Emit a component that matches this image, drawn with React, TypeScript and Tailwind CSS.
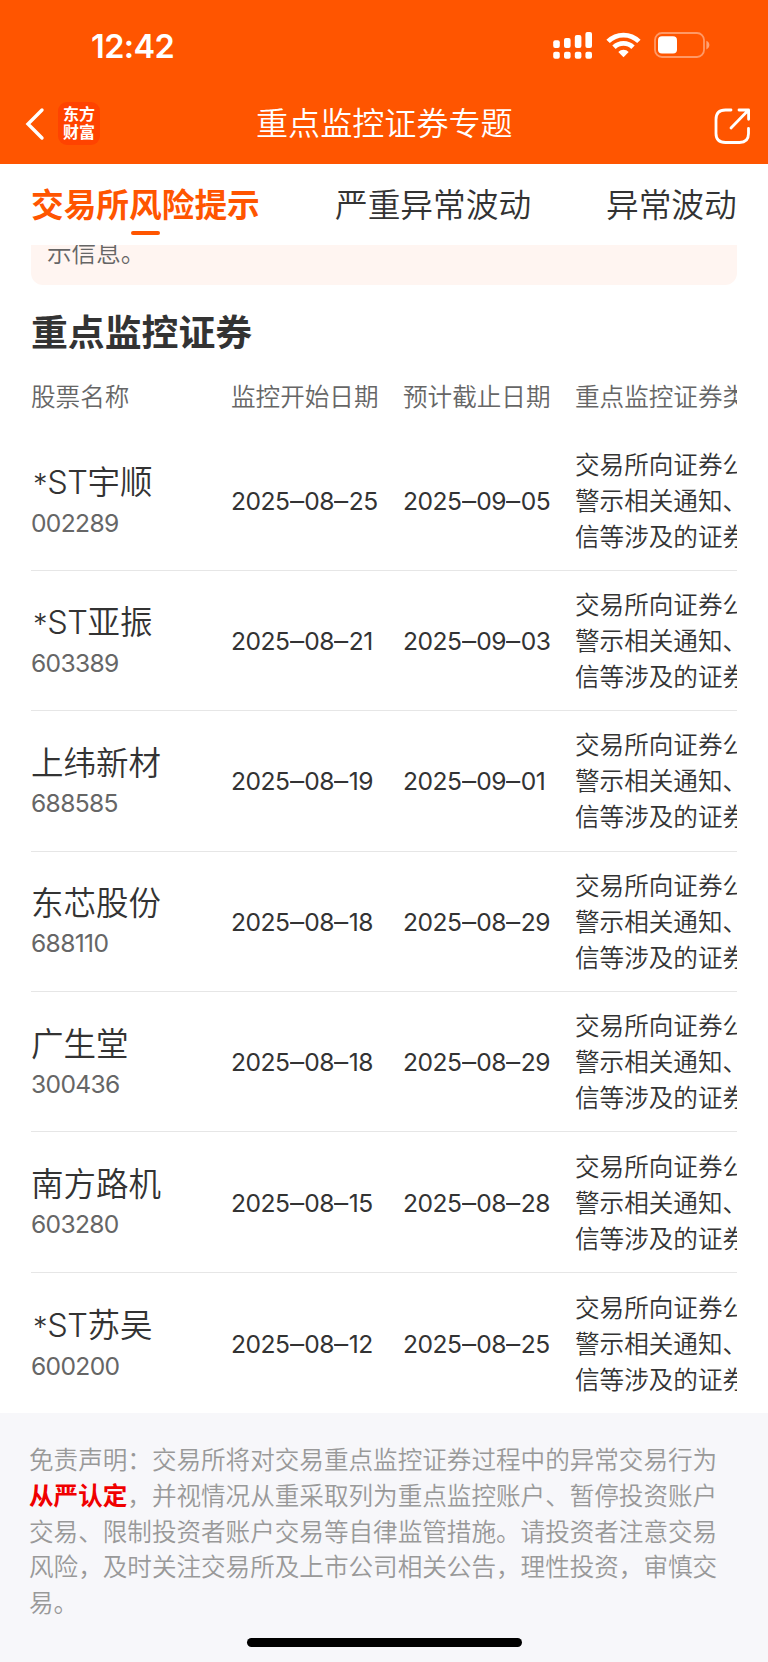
const STOCKS = [
  { name: '宇顺', st: true, code: '002289', start: '2025–08–25', end: '2025–09–05' },
  { name: '亚振', st: true, code: '603389', start: '2025–08–21', end: '2025–09–03' },
  { name: '上纬新材', st: false, code: '688585', start: '2025–08–19', end: '2025–09–01' },
  { name: '东芯股份', st: false, code: '688110', start: '2025–08–18', end: '2025–08–29' },
  { name: '广生堂', st: false, code: '300436', start: '2025–08–18', end: '2025–08–29' },
  { name: '南方路机', st: false, code: '603280', start: '2025–08–15', end: '2025–08–28' },
  { name: '苏吴', st: true, code: '600200', start: '2025–08–12', end: '2025–08–25' },
];

const DISCLAIMER = [
  '，并视情况从重采取列为重点监控账户、暂停投资账户',
  '交易、限制投资者账户交易等自律监管措施。请投资者注意交易',
  '风险，及时关注交易所及上市公司相关公告，理性投资，审慎交',
  '易。',
];

function SignalIcon() {
  return (
    <svg width="40" height="28" viewBox="0 0 40 28" fill="#fff">
      <rect x="0.2" y="8.2" width="6.6" height="7.8" rx="2" />
      <rect x="11" y="6" width="6.6" height="10" rx="2" />
      <rect x="21.8" y="3" width="6.6" height="13" rx="2" />
      <rect x="32.4" y="0" width="6.6" height="16" rx="2" />
      <rect x="0.2" y="19.8" width="6.6" height="7" rx="2" />
      <rect x="11" y="19.8" width="6.6" height="7" rx="2" />
      <rect x="21.8" y="19.8" width="6.6" height="7" rx="2" />
      <rect x="32.4" y="19.8" width="6.6" height="7" rx="2" />
    </svg>
  );
}

function WifiIcon() {
  return (
    <svg width="35" height="26" viewBox="0 0 35 26" fill="none" stroke="#fff" strokeWidth="4.8">
      <path d="M2.1 9.4a21.8 21.8 0 0 1 30.8 0" />
      <path d="M8 15.3a13.4 13.4 0 0 1 19 0" />
      <path d="M17.5 25.2l-5.2-5.3a7.4 7.4 0 0 1 10.4 0z" fill="#fff" stroke="none" />
    </svg>
  );
}

function BatteryIcon() {
  return (
    <svg width="56" height="26" viewBox="0 0 56 26">
      <rect x="1" y="1" width="49" height="24" rx="7" fill="none" stroke="#fff" strokeOpacity=".4" strokeWidth="1.8" />
      <rect x="4" y="4.2" width="19" height="17.4" rx="4" fill="#fff" />
      <path d="M52.4 8.8c4 1.3 4 7.3 0 8.6z" fill="#fff" fillOpacity=".45" />
    </svg>
  );
}

function StatusBar() {
  return (
    <div className="flex h-[78px] pl-[91px]">
      <div className="mt-[27px] w-[462px] font-['Inter'] text-[32.500px] leading-[40px] font-semibold tracking-[-0.600px]">12:42</div>
      <div className="mt-[32px]"><SignalIcon /></div>
      <div className="mt-[32px] ml-[13px]"><WifiIcon /></div>
      <div className="mt-[32px] ml-[13px]"><BatteryIcon /></div>
    </div>
  );
}

function NavBar() {
  return (
    <div className="flex h-[85px] items-start pl-[25px]">
      <svg className="mt-[29px]" width="21" height="34" viewBox="0 0 21 34" fill="none" stroke="#fff" strokeWidth="3.4" strokeLinecap="round">
        <path d="M17 3 3 17 17 31" />
      </svg>
      <div className="mt-[24px] ml-[12px] flex h-[43px] w-[42px] flex-col items-center justify-center rounded-[9px] bg-[#ff4300] text-[16px] leading-[17.500px] font-bold">
        <span>东方</span>
        <span>财富</span>
      </div>
      <div className="mt-[23px] ml-[156px] w-[458px] text-[32.100px] leading-[46px] font-[350]">重点监控证券专题</div>
      <svg className="mt-[30px]" width="38" height="38" viewBox="0 0 38 38" fill="none" stroke="#fff" strokeWidth="2.8" strokeLinecap="round" strokeLinejoin="round">
        <path d="M17 2H11.500C5 2 2 5.500 2 11.500V25.500c0 6 3 9 9.500 9h14c6 0 9-3 9-9V20.500" />
        <path d="M25 2h9.600v9.300M34 2.600 17 20" />
      </svg>
    </div>
  );
}

function DateText({ value }: { value: string }) {
  const [year, month, day] = value.split('–');
  const dash = <span className="mx-[1.500px] inline-block scale-x-[1.150]">–</span>;
  return (
    <div className="w-[172px] shrink-0 font-[380] tracking-[-0.500px]">
      {year}{dash}{month}{dash}{day}
    </div>
  );
}

export default function App() {
  return (
    <div className="flex h-[1662px] w-[768px] flex-col overflow-hidden bg-white font-['Inter','Noto_Sans_CJK_SC',sans-serif] font-[350] text-[#333]">
      <header className="h-[163.500px] shrink-0 bg-[#ff5500] text-white">
        <StatusBar />
        <NavBar />
      </header>

      <nav className="flex h-[81.500px] shrink-0 items-start pl-[31px] text-[32.700px] leading-[48px] whitespace-nowrap">
        <div className="flex w-[304px] flex-col pt-[17px] font-bold text-[#ff5500]">
          <span>交易所风险提示</span>
          <span className="mt-[2px] ml-[100px] h-[4px] w-[29px] rounded-full bg-[#ff5500]" />
        </div>
        <div className="w-[271px] pt-[17px]">严重异常波动</div>
        <div className="pt-[17px]">异常波动</div>
      </nav>

      <section className="mx-[31px] h-[40px] shrink-0 overflow-hidden rounded-b-[12px] bg-[#fff5f1] pl-[16px] text-[24.580px] leading-[36px] text-[#666]">
        <div className="-mt-[10px]">示信息。</div>
      </section>

      <h2 className="mt-[21px] ml-[31px] h-[53px] shrink-0 text-[36.860px] leading-[53px] font-bold">重点监控证券</h2>

      <main className="mx-[31px] h-[1054px] shrink-0 overflow-hidden">
        <div className="flex h-[71.500px] pt-[20px] text-[24.580px] leading-[36px] whitespace-nowrap text-[#666]">
          <div className="w-[200px] shrink-0">股票名称</div>
          <div className="w-[172px] shrink-0">监控开始日期</div>
          <div className="w-[172px] shrink-0">预计截止日期</div>
          <div className="shrink-0">重点监控证券类型</div>
        </div>
        {STOCKS.map((s) => (
          <div key={s.code} className="flex h-[140.400px] items-center border-b border-[#e6e6e6] pt-[1px] text-[24.580px] leading-[36px] whitespace-nowrap last:border-b-0">
            <div className="w-[200px] shrink-0">
              <div className="text-[32.500px] leading-[46px]">
                {s.st && <span className="tracking-[-0.400px]"><span className="ml-[2px] text-[29px]">*</span>ST</span>}
                {s.name}
              </div>
              <div className="-mt-[2px] mb-px leading-[36px] font-[380] tracking-[-0.650px] text-[#666]">{s.code}</div>
            </div>
            <DateText value={s.start} />
            <DateText value={s.end} />
            <div className="shrink-0">
              <div>交易所向证券公司发出</div>
              <div>警示相关通知、监管函</div>
              <div>信等涉及的证券品种</div>
            </div>
          </div>
        ))}
      </main>

      <footer className="flex grow flex-col bg-[#f7f7fa] pt-[30px] pl-[29px] text-[24.580px] leading-[35.800px] whitespace-nowrap text-[#999]">
        <div>免责声明：交易所将对交易重点监控证券过程中的异常交易行为</div>
        <div><b className="font-bold text-[#f00000]">从严认定</b>{DISCLAIMER[0]}</div>
        {DISCLAIMER.slice(1).map((line) => (
          <div key={line}>{line}</div>
        ))}
        <div className="mt-[16px] ml-[218px] h-[9px] w-[275px] rounded-full bg-black" />
      </footer>
    </div>
  );
}
